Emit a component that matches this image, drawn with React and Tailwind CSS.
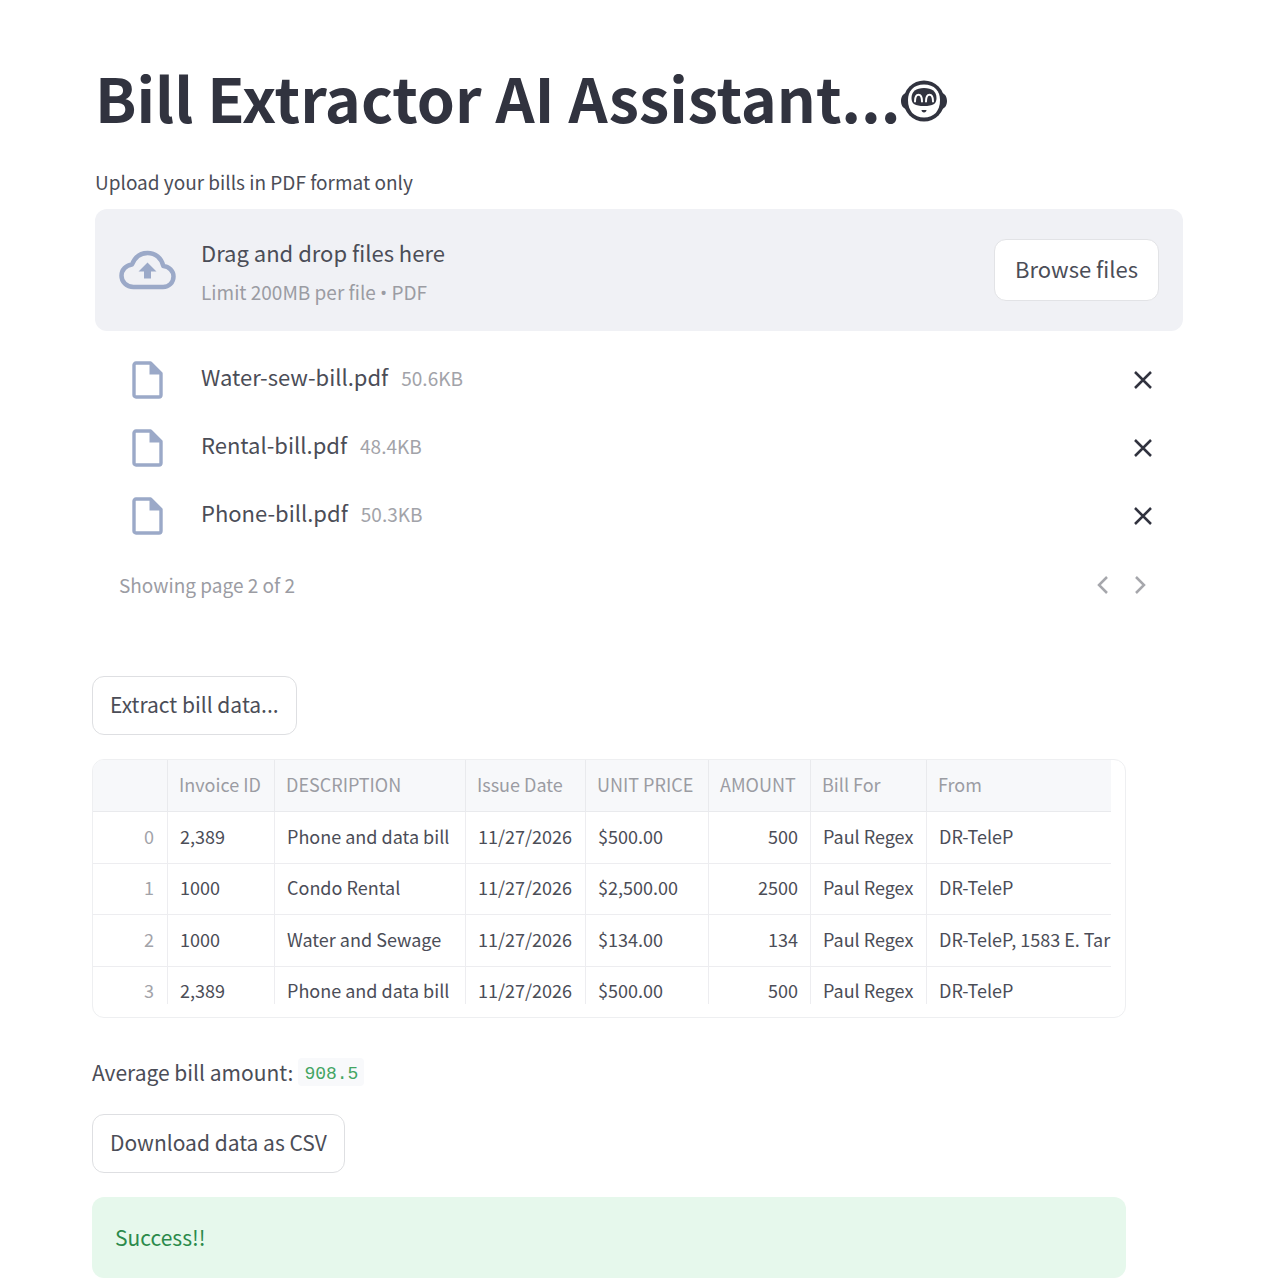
import React from "react";

const files = [
  { name: "Water-sew-bill.pdf", size: "50.6KB" },
  { name: "Rental-bill.pdf", size: "48.4KB" },
  { name: "Phone-bill.pdf", size: "50.3KB" },
];

const rows = [
  ["2,389", "Phone and data bill", "11/27/2026", "$500.00", "500", "Paul Regex", "DR-TeleP"],
  ["1000", "Condo Rental", "11/27/2026", "$2,500.00", "2500", "Paul Regex", "DR-TeleP"],
  ["1000", "Water and Sewage", "11/27/2026", "$134.00", "134", "Paul Regex", "DR-TeleP, 1583 E. Tar"],
  ["2,389", "Phone and data bill", "11/27/2026", "$500.00", "500", "Paul Regex", "DR-TeleP"],
];

const headers = ["Invoice ID", "DESCRIPTION", "Issue Date", "UNIT PRICE", "AMOUNT", "Bill For", "From"];

function Robot() {
  return (
    <svg viewBox="0 0 46 42" className="mt-2 h-[42px] w-[46px] shrink-0" aria-hidden="true">
      <path d="M5 13C1.500 14 0 17.500 0 21s1.500 7 5 8ZM41 13c3.500 1 5 4.500 5 8s-1.500 7-5 8Z" fill="#31333f" />
      <ellipse cx="23" cy="21" rx="20.500" ry="20.500" fill="#31333f" />
      <path d="M23 4.500C12.500 4.500 7 11 7 20c0 11 6 17.500 16 17.500S39 31 39 20C39 11 33.500 4.500 23 4.500Z" fill="#fff" />
      <path d="M23 8c-8 0-12.500 3.500-12.500 10 0 6 3.500 8 12.500 8s12.500-2 12.500-8C35.500 11.500 31 8 23 8Z" fill="#31333f" />
      <path d="M14 21.500c0-9 7-9 7 0M25 21.500c0-9 7-9 7 0" fill="none" stroke="#fff" strokeWidth="2" strokeLinecap="round" />
      <path d="M20.500 30h5c0 1.600-1.100 2.500-2.500 2.500s-2.500-.9-2.500-2.500Z" fill="#31333f" />
    </svg>
  );
}

function Cloud() {
  return (
    <svg viewBox="0 0 57 40" className="h-10 w-[57px] shrink-0" fill="none" aria-hidden="true">
      <path d="M14.500 37C7.500 37 2.500 32 2.500 25.800c0-6 4.500-10.600 10.500-11.300C15.800 7.500 21.500 3 28.500 3c8 0 14 5.200 15.800 13C50 16.500 54.500 21 54.500 26.500 54.500 32.500 50 37 44 37Z" stroke="#9ba9c8" strokeWidth="4.500" strokeLinejoin="round" />
      <path d="M28.500 12.500 37.500 21.500H32V28.500H25V21.500H19.500Z" fill="#9ba9c8" />
    </svg>
  );
}

function FileIcon() {
  return (
    <svg viewBox="0 0 31 38" className="h-[38px] w-[31px] shrink-0" aria-hidden="true">
      <path d="M4 2h14.500L29 12.500V34a2 2 0 0 1-2 2H4a2 2 0 0 1-2-2V4a2 2 0 0 1 2-2Z" fill="none" stroke="#9ba9c8" strokeWidth="3.400" strokeLinejoin="round" />
      <path d="M17.500 2 29.500 13.500H17.500Z" fill="#9ba9c8" />
    </svg>
  );
}

function Stroke({ d }) {
  return (
    <svg viewBox="0 0 20 20" className="size-5" fill="none" stroke="currentColor" strokeWidth="2.500" aria-hidden="true">
      <path d={d} />
    </svg>
  );
}

export default function App() {
  return (
    <main className="min-h-screen bg-white pt-[61px] font-['Noto_Sans_CJK_SC',sans-serif] text-[22px] leading-8 text-[#4b4d57]">
      <section className="mr-[97px] ml-[95px]">
        <h1 className="flex items-center text-[61px] leading-[72px] font-bold text-[#31333f]">
          <span>Bill Extractor AI Assistant...</span>
          <Robot />
        </h1>
        <label htmlFor="browse" className="mt-[33px] block text-[19px]">
          Upload your bills in PDF format only
        </label>
        <div className="mt-[11px] flex h-[122px] items-center rounded-xl bg-[#f0f1f5] px-6">
          <Cloud />
          <div className="ml-[25px] flex-1 pt-1">
            <p className="leading-10">Drag and drop files here</p>
            <p className="text-[19px] leading-10 text-[#9b9ca3]">
              Limit 200MB per file <span className="font-['Open_Sans',sans-serif]">•</span> PDF
            </p>
          </div>
          <button id="browse" type="button" className="h-[62px] rounded-xl border border-[#e2e3e6] bg-white px-5 pb-1">
            Browse files
          </button>
        </div>
        <ul className="mt-[15px] pr-[30px] pl-[37px]">
          {files.map((f) => (
            <li key={f.name} className="flex h-[68px] items-center">
              <FileIcon />
              <span className="ml-[38px] flex flex-1 items-baseline pb-[6px]">
                {f.name}
                <span className="ml-[13px] text-[19px] text-[#a2a3a9]">{f.size}</span>
              </span>
              <button type="button" aria-label={`Remove ${f.name}`} className="text-[#31333f]">
                <Stroke d="M2 2 18 18M18 2 2 18" />
              </button>
            </li>
          ))}
        </ul>
        <nav className="mt-[19px] flex items-center pr-[33px] pl-6">
          <span className="flex-1 text-[19px] text-[#9b9ca3]">Showing page 2 of 2</span>
          <button type="button" aria-label="Previous page" className="mr-[17px] text-[#a6a7ac]">
            <Stroke d="M14 2 6 10 14 18" />
          </button>
          <button type="button" aria-label="Next page" className="text-[#a6a7ac]">
            <Stroke d="M6 2 14 10 6 18" />
          </button>
        </nav>
      </section>

      <section className="mt-[75px] mr-[154px] ml-[92px] text-[21px]">
        <button type="button" className="block h-[59px] rounded-xl border border-[#dedfe2] px-[17px] pb-1">
          Extract bill data...
        </button>
        <div className="mt-6 overflow-hidden rounded-xl border border-[#eeeff1] pr-[14px] pb-[13px]">
          <div className="h-[244px] overflow-hidden">
            <table className="w-full table-fixed border-separate border-spacing-0 text-[18px] leading-6 whitespace-nowrap">
              <colgroup>
                <col className="w-[75px]" />
                <col className="w-[107px]" />
                <col className="w-[191px]" />
                <col className="w-[120px]" />
                <col className="w-[123px]" />
                <col className="w-[102px]" />
                <col className="w-[116px]" />
                <col />
              </colgroup>
              <thead>
                <tr className="h-[52px] bg-[#f7f8fa] text-left text-[#9b9ca3]">
                  <td className="border-r border-b border-[#e9eaed]" />
                  {headers.map((h) => (
                    <th key={h} scope="col" className="border-r border-b border-[#e9eaed] px-[11px] pb-[3px] font-normal last:border-r-0">
                      {h}
                    </th>
                  ))}
                </tr>
              </thead>
              <tbody>
                {rows.map((r, i) => (
                  <tr key={i} className="h-[52px] even:h-[51px]">
                    <th scope="row" className="border-r border-b border-[#ededf0] pr-[13px] pb-1 text-right font-normal text-[#a2a3a9]">
                      {i}
                    </th>
                    {r.map((c, j) => (
                      <td key={j} className="overflow-hidden border-r border-b border-[#ededf0] px-3 pb-1 last:border-r-0 nth-[6]:text-right">
                        {c}
                      </td>
                    ))}
                  </tr>
                ))}
              </tbody>
            </table>
          </div>
        </div>
        <p className="mt-[38px] flex h-8 items-center">
          Average bill amount:
          <code className="ml-[5px] rounded bg-[#f8f9fb] px-[6px] pt-1 font-['Liberation_Mono',monospace] text-[18px] leading-6 text-[#43a563]">908.5</code>
        </p>
        <button type="button" className="mt-[26px] block h-[59px] rounded-xl border border-[#dedfe2] px-[17px] pb-1">
          Download data as CSV
        </button>
        <div role="status" className="mt-6 flex h-[81px] items-center rounded-xl bg-[#e6f8ec] px-[23px] pb-[2px] text-[#2b8a4b]">
          Success!!
        </div>
      </section>
    </main>
  );
}
